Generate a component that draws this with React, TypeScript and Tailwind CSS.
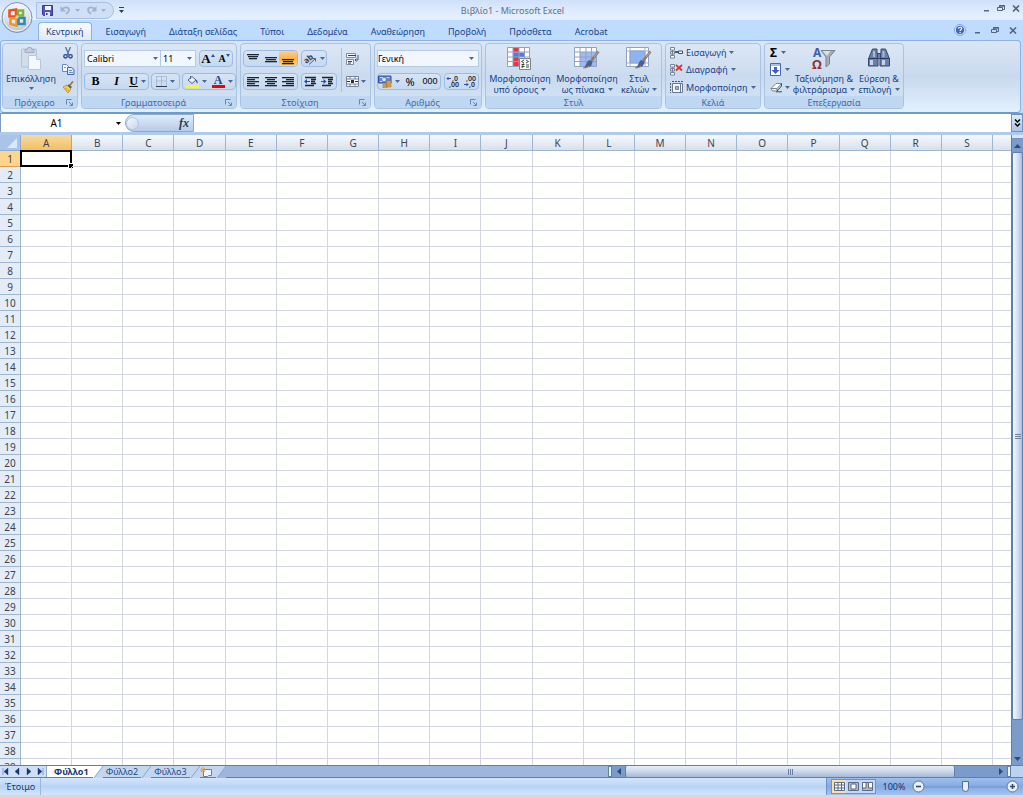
import type { ReactNode } from "react";

const COLUMNS = "ABCDEFGHIJKLMNOPQRS".split("");

const ROWS = Array.from({ length: 39 }, (_, i) => i + 1);

const TABS = [
    "Κεντρική",
    "Εισαγωγή",
    "Διάταξη σελίδας",
    "Τύποι",
    "Δεδομένα",
    "Αναθεώρηση",
    "Προβολή",
    "Πρόσθετα",
    "Acrobat",
];

/* ---------- small shared pieces ---------- */

function Caret({ className = "text-[#4a6896]" }: { className?: string }) {
    return (
        <svg width="5" height="3" viewBox="0 0 5 3" className={`shrink-0 ${className}`}>
            <path d="M0 0h5L2.500 3z" fill="currentColor" />
        </svg>
    );
}

function Frame({ children, className = "" }: { children: ReactNode; className?: string }) {
    return (
        <div
            className={`flex h-[17px] items-center rounded-sm border border-[#9dbbe0] bg-linear-to-b from-[#d6e4f5] to-[#c6d9f0] ${className}`}
        >
            {children}
        </div>
    );
}

function Tool({
    label,
    children,
    className = "",
}: {
    label: string;
    children: ReactNode;
    className?: string;
}) {
    return (
        <button
            type="button"
            aria-label={label}
            className={`flex h-full flex-1 items-center justify-center gap-[3px] text-black ${className}`}
        >
            {children}
        </button>
    );
}

interface GroupProps {
    title: string;
    launcher?: boolean;
    className: string;
    children: ReactNode;
}

function Group({ title, launcher, className, children }: GroupProps) {
    return (
        <section
            className={`flex h-[66px] shrink-0 flex-col overflow-hidden rounded-sm border border-[#a9c3e2] bg-linear-to-b from-[#dce7f5] via-[#cbdbef] to-[#d3e3f5] ${className}`}
        >
            <div className="flex min-h-0 flex-1">{children}</div>
            <div className="flex h-3 shrink-0 items-center bg-[#bfd7f1] text-[#3e6aaa]">
                <h2 className="flex-1 text-center">{title}</h2>
                {launcher && (
                    <button type="button" aria-label={`${title}…`} className="pr-1">
                        <svg width="7" height="7" viewBox="0 0 7 7" fill="none" stroke="#6686b5">
                            <path d="M.5 5.500V.5h5M3 3l3 3M6.500 3.500v3h-3" />
                        </svg>
                    </button>
                )}
            </div>
        </section>
    );
}

function BigButton({
    icon,
    lines,
    className = "",
}: {
    icon: ReactNode;
    lines: string[];
    className?: string;
}) {
    return (
        <button
            type="button"
            className={`flex shrink-0 flex-col items-center pt-[2px] leading-[11px] whitespace-nowrap text-[#15428b] ${className}`}
        >
            <span className="flex h-[27px] items-start">{icon}</span>
            <span>{lines[0]}</span>
            <span className="flex h-[11px] items-center gap-[3px]">
                {lines[1]}
                <Caret />
            </span>
        </button>
    );
}

/* ---------- icons ---------- */

function OfficeLogo() {
    return (
        <svg width="34" height="34" viewBox="0 0 34 34">
            <defs>
                <radialGradient id="orb" cx="50%" cy="30%" r="75%">
                    <stop offset="0" stopColor="#ffffff" />
                    <stop offset=".55" stopColor="#dfe3ea" />
                    <stop offset="1" stopColor="#a9b4c6" />
                </radialGradient>
            </defs>
            <circle cx="17" cy="17.500" r="15" fill="url(#orb)" stroke="#7e93b3" />
            <circle cx="17" cy="17.500" r="13.500" fill="none" stroke="#f5f8fc" />
            <g fill="none" strokeWidth="2.600">
                <path d="M16 16.500H9.500v-6l6.500-1z" stroke="#e8551f" />
                <path d="M18 15.500v-5h5v5z" stroke="#7cb53a" />
                <path d="M10.500 18.500h6v7l-6-1.500z" stroke="#ee9a22" />
                <path d="M18.500 18h6v6h-6z" stroke="#3388b8" />
            </g>
            <path d="M15.500 15.500h3v3h-3z" fill="#fff" opacity=".6" />
        </svg>
    );
}

function SaveIcon() {
    return (
        <svg width="11" height="11" viewBox="0 0 11 11">
            <path d="M.5.5h10v10h-9l-1-1z" fill="#5656b8" stroke="#3a3a8c" />
            <path d="M3 1h6v4H3z" fill="#f1f4fb" />
            <path d="M3 7h5v4H3z" fill="#dfe3f2" />
            <path d="M4 8h1.500v2H4z" fill="#3a3a8c" />
        </svg>
    );
}

function UndoIcon({ flip = false }: { flip?: boolean }) {
    return (
        <svg width="11" height="10" viewBox="0 0 11 10" className={flip ? "-scale-x-100" : ""}>
            <path
                d="M2 4.500C4 1.500 9 1.500 9 5c0 2-1.500 3-3 4"
                fill="none"
                stroke="#9fb2cf"
                strokeWidth="1.800"
            />
            <path d="M.5 1v5.500H6z" fill="#9fb2cf" />
        </svg>
    );
}

function WindowButtons({ className = "" }: { className?: string }) {
    return (
        <div className={`flex items-center text-[#56657c] ${className}`}>
            <button type="button" aria-label="Ελαχιστοποίηση">
                <svg width="7" height="7" viewBox="0 0 7 7">
                    <path d="M1 5h5v1.500H1z" fill="currentColor" />
                </svg>
            </button>
            <button type="button" aria-label="Επαναφορά">
                <svg width="8" height="7" viewBox="0 0 8 7" fill="none" stroke="currentColor">
                    <path d="M2.500 2V.5h5v4H6M.5 2.500h5v3h-5z" />
                    <path d="M2 1h6" strokeWidth="1.500" />
                </svg>
            </button>
            <button type="button" aria-label="Κλείσιμο">
                <svg width="8" height="7" viewBox="0 0 8 7" stroke="currentColor" fill="none">
                    <path d="M1 .5l6 6M7 .5l-6 6" strokeWidth="1.600" />
                </svg>
            </button>
        </div>
    );
}

function HelpIcon() {
    return (
        <svg width="12" height="12" viewBox="0 0 12 12">
            <circle cx="6" cy="6" r="5.500" fill="#e4edfa" stroke="#8aa5d2" />
            <circle cx="6" cy="6" r="4.200" fill="#3d66c0" />
            <path
                d="M4.500 4.800c0-2 3.200-2 3.200-.2 0 1.200-1.600 1.200-1.600 2.400"
                fill="none"
                stroke="#fff"
                strokeWidth="1.200"
            />
            <path d="M5.500 8h1.200v1.200H5.500z" fill="#fff" />
        </svg>
    );
}

function PasteIcon() {
    return (
        <svg width="22" height="25" viewBox="0 0 22 25">
            <rect x="1.500" y="3" width="15" height="18" rx="1" fill="#d3dceb" stroke="#b3c0d6" />
            <path d="M5 3.500h2l1-2h3l1 2h2v3H5z" fill="#c3cddd" stroke="#9dabc3" />
            <path d="M8.500 9.500h8l4 4v10h-12z" fill="#f4f7fc" stroke="#b8c6dc" />
            <path d="M16.500 9.500v4h4" fill="#dbe4f2" stroke="#b8c6dc" />
        </svg>
    );
}

function CutIcon() {
    return (
        <svg width="10" height="12" viewBox="0 0 10 12" fill="none">
            <path d="M2.500 0l3.500 8M7.500 0L4 8" stroke="#5b76ad" strokeWidth="1.400" />
            <circle cx="2.500" cy="9.300" r="1.700" stroke="#2b4a94" strokeWidth="1.400" />
            <circle cx="7.500" cy="9.300" r="1.700" stroke="#2b4a94" strokeWidth="1.400" />
        </svg>
    );
}

function CopyIcon() {
    return (
        <svg width="13" height="11" viewBox="0 0 13 11">
            <path d="M.5.5h4l2 2v5h-6z" fill="#f3f7ff" stroke="#6f88be" />
            <path d="M5.500 3.500h4l2.500 2v5H5.500z" fill="#dbe6fb" stroke="#4767ab" />
            <path d="M7 6.500h3M7 8.500h4M2 3.500h2" stroke="#6f8fd0" />
        </svg>
    );
}

function BrushIcon() {
    return (
        <svg width="12" height="12" viewBox="0 0 12 12">
            <path d="M1 6l4-2 4 4-3 4z" fill="#f4cf58" stroke="#b98a2c" strokeWidth=".8" />
            <path d="M3 7l4 3" stroke="#b98a2c" strokeWidth=".7" />
            <path d="M5.500 4.500L7 3l3 3-1.500 1.500z" fill="#5b5f78" />
            <path d="M8 4l3-3.500" stroke="#a0783c" strokeWidth="1.800" />
        </svg>
    );
}

function BordersIcon() {
    return (
        <svg width="11" height="11" viewBox="0 0 11 11" fill="none" stroke="#8d9fbe">
            <path d="M.5.5h10v9M.5.5v9M5.500.5v9M.5 5h10" strokeDasharray="1 1" />
            <path d="M0 10.500h11" stroke="#2e3d59" />
        </svg>
    );
}

function FillIcon() {
    return (
        <svg width="13" height="13" viewBox="0 0 13 13">
            <path d="M2 5l4-3.500L10 5 6 8.500z" fill="#e9effa" stroke="#4c6391" />
            <path d="M4.500 4V1" stroke="#4c6391" />
            <path d="M9.500 4.500c2 .5 2.500 2 2 4-1-.5-2-2-2-4z" fill="#3a62b5" />
            <path d="M0 10h13v3H0z" fill="#ffff00" />
        </svg>
    );
}

function AlignIcon({ widths, top = 1 }: { widths: [number, number][]; top?: number }) {
    return (
        <svg width="12" height="12" viewBox="0 0 12 12">
            {widths.map(([x, w], i) => (
                <rect key={i} x={x} y={top + i * 2} width={w} height="1.300" fill="#1d2530" />
            ))}
        </svg>
    );
}

function OrientationIcon() {
    return (
        <svg width="13" height="12" viewBox="0 0 13 12" className="overflow-visible">
            <text
                x="0"
                y="9"
                fontSize="8"
                fontWeight="700"
                fill="#333b49"
                transform="rotate(-40 4 7)"
            >
                ab
            </text>
            <path d="M5 11.500L11 6M11.500 8.500V5.500h-3" fill="none" stroke="#555f70" />
        </svg>
    );
}

function IndentIcon({ right = false }: { right?: boolean }) {
    return (
        <svg width="13" height="11" viewBox="0 0 13 11">
            <path
                d="M1 1.500h11M7 3.500h5M7 5.500h4M7 7.500h5M1 9.500h9"
                stroke="#1d2530"
                strokeWidth="1.300"
            />
            <path d={right ? "M5.500 5.500l-3-2.500v5z" : "M0 5.500l3-2.500v5z"} fill="#2a4f9e" />
            <path d={right ? "M0 5.500h3" : "M3 5.500h3"} stroke="#2a4f9e" />
        </svg>
    );
}

function WrapIcon() {
    return (
        <svg width="13" height="12" viewBox="0 0 13 12" fill="none">
            <path d="M.5.5h9v4h-9zM.5 6.500h7v5h-7z" fill="#f5f7fb" stroke="#818c9f" />
            <path d="M2 2.500h8M2 8.500h4M2 10h3" stroke="#39424f" />
            <path d="M12 2v5H9M10.500 5.500L9 7l1.500 1.500" stroke="#4d5a70" />
        </svg>
    );
}

function MergeIcon() {
    return (
        <svg width="13" height="11" viewBox="0 0 13 11">
            <path d="M.5.5h12v10H.5z" fill="#fff" stroke="#75829a" />
            <path d="M.5 3h12M.5 8h12M4 .5V3M9 .5V3M4 8v2.500M9 8v2.500" stroke="#75829a" />
            <path d="M1 5.500h3M12 5.500H9" stroke="#23304a" />
            <path d="M5 4h3v3H5z" fill="#23304a" />
        </svg>
    );
}

function CurrencyIcon() {
    return (
        <svg width="14" height="13" viewBox="0 0 14 13">
            <path d="M.5 1h12.500v7H.5z" fill="#6386cf" stroke="#32509b" />
            <path d="M2 2.500h3M8.500 2.500h3M2 6.500h2" stroke="#c4d4f4" />
            <circle cx="6" cy="4.500" r="1.800" fill="#dce7fb" />
            <path d="M5 9.500h4v3.500H5zM8.500 6h4.500v6H8.500z" fill="#e3b04c" stroke="#a9762a" strokeWidth=".6" />
            <path d="M8.500 8h4.500M8.500 10h4.500M5 11.300h3.500" stroke="#a9762a" strokeWidth=".6" />
        </svg>
    );
}

function DecimalIcon({ less = false }: { less?: boolean }) {
    return (
        <svg
            width="14"
            height="13"
            viewBox="0 0 14 13"
            fontSize="7"
            fontWeight="600"
            className="overflow-visible"
        >
            <path
                d={less ? "M1 9.500h4M3.500 8l1.500 1.500L3.500 11" : "M1 3.500h4M2.500 2L1 3.500 2.500 5"}
                fill="none"
                stroke="#2a4f9e"
            />
            <text x={less ? 3 : 6} y="6" fill="#222c3c">
                {less ? ",00" : ",0"}
            </text>
            <text x={less ? 6 : 3} y="12" fill="#222c3c">
                {less ? ",0" : ",00"}
            </text>
        </svg>
    );
}

function StyleGrid({ kind }: { kind: "rules" | "table" | "cell" }) {
    return (
        <svg width="26" height="25" viewBox="0 0 26 25">
            <path d="M.5 1.500h22v19H.5z" fill="#fff" stroke="#8fa2c4" />
            {kind === "rules" && (
                <>
                    <path d="M6 2h6v4.500H6zM6 11h6v9H6z" fill="#e03a3a" />
                    <path d="M6 6.500h11.500V11H6z" fill="#4f7ede" />
                </>
            )}
            {kind === "table" && <path d="M6 6h16v14H6z" fill="#9dbbf2" />}
            {kind === "cell" && <path d="M4 5h15v12H4z" fill="#8fb2f3" stroke="#6f92d6" />}
            {kind === "cell" ? (
                <path d="M.5 5h22M4 1.500v19M19 1.500v19M.5 17h22" stroke="#a4b3cd" fill="none" />
            ) : (
                <path
                    d="M6 1.500v19M12 1.500v19M17.500 1.500v19M.5 6h22M.5 11h22M.5 15.500h22"
                    stroke="#8fa2c4"
                    fill="none"
                />
            )}
            {kind === "rules" ? (
                <>
                    <path d="M12.500 12.500h11v11h-11z" fill="#f6f8f2" stroke="#7c8594" />
                    <path
                        d="M17 14l-2.500 1.500L17 17M19 14l2.500 1.500L19 17M14.500 18.500h3M14.500 20.500h3M16.500 17.500L15 22M19 19h3M19 21h3"
                        fill="none"
                        stroke="#2f3a33"
                        strokeWidth=".9"
                    />
                </>
            ) : (
                <>
                    <path d="M24.500 5.500L17 15" stroke="#8d7b6c" strokeWidth="2.600" />
                    <path d="M24.500 5.500L20 11" stroke="#b9a999" strokeWidth="1" />
                    <path d="M18.500 15.500c0 4-3.500 7-9.500 6.500 3.500-1.500 3-5.500 6-8z" fill="#4a5f93" />
                    <path d="M9 22c3 .5 5-1 6-2" stroke="#d49a4a" fill="none" />
                </>
            )}
        </svg>
    );
}

function CellsIcon({ kind }: { kind: "insert" | "delete" | "format" }) {
    if (kind === "format") {
        return (
            <svg width="13" height="13" viewBox="0 0 13 13" fill="none">
                <path d="M2.500 2.500h10v9h-10z" fill="#f2f5fb" stroke="#667895" />
                <path d="M5.500 5.500h3v3h-3z" fill="#a3aec1" stroke="#76849c" />
                <path d="M2 .5h11M.5 2v10" stroke="#4c5a73" strokeDasharray="2 1" />
                <path d="M10.500 3v9" stroke="#667895" />
            </svg>
        );
    }
    return (
        <svg width="13" height="12" viewBox="0 0 13 12" fill="none">
            <path d="M.5.5h4v2.500h-4zM.5 8.500h4V11h-4z" fill="#fff" stroke="#75829a" />
            <path d="M2.500 3v5.500M.5 4.500h4v2.500h-4z" fill="#e4ebf7" stroke="#75829a" />
            {kind === "insert" ? (
                <>
                    <path d="M5 5h3" stroke="#222c3c" strokeWidth="1.500" />
                    <path d="M8.500 4h4v2.500h-4z" fill="#fff" stroke="#3e4c66" />
                </>
            ) : (
                <path d="M6 1l6 5.500M12 1L6 6.500" stroke="#d83434" strokeWidth="1.700" />
            )}
        </svg>
    );
}

function FillDownIcon() {
    return (
        <svg width="11" height="13" viewBox="0 0 11 13">
            <path d="M.5.5h10v12H.5z" fill="#fff" stroke="#4a68ab" />
            <path d="M1 1h9v2H1z" fill="#a9c0ea" />
            <path d="M4 4h3v3h2.500L5.500 11 1.500 7H4z" fill="#3b62c4" />
        </svg>
    );
}

function EraserIcon() {
    return (
        <svg width="13" height="11" viewBox="0 0 13 11">
            <path d="M1 6.500L6 1.500h5.500L7 6.500z" fill="#fff" stroke="#7a8494" />
            <path d="M1 6.500h6v2.500H2.500z" fill="#f0f2f6" stroke="#7a8494" />
            <path d="M7 9l4.500-5V1.500M6 9.800h6" stroke="#3f4856" fill="none" />
        </svg>
    );
}

function SortFilterIcon() {
    return (
        <svg width="24" height="25" viewBox="0 0 24 25" className="overflow-visible">
            <path d="M9 4.500h14L17.500 11v7L14 21v-10z" fill="#a8adb5" stroke="#7d838d" />
            <path d="M10.500 5h8L15 10z" fill="#dcdfe4" />
            <text x="1" y="11" fontSize="12" fontWeight="700" fill="#3e5fa6">
                A
            </text>
            <text x="0" y="23" fontSize="13" fontWeight="700" fill="#8e3038">
                Ω
            </text>
        </svg>
    );
}

function BinocularsIcon() {
    return (
        <svg width="24" height="24" viewBox="0 0 24 24">
            <g fill="#6980ab" stroke="#34496f">
                <path d="M5.500 3h4.500v3l1 4v10H1.500v-7L4 6.500z" />
                <path d="M14 3h4.500L20 6.500l2.500 6.500v7H13V10l1-4z" />
                <path d="M10.500 7.500h3v5h-3z" />
            </g>
            <path d="M3 14h3v5H3zM15 14h3v5h-3z" fill="#c7d4ea" />
            <path d="M6 5h2v6H6zM15.500 5h2v6h-2z" fill="#a9bad8" />
            <path d="M1.500 12.500H11M13 12.500h9.500" stroke="#2a3c60" />
        </svg>
    );
}

/* ---------- top area ---------- */

function TitleBar() {
    return (
        <header className="flex h-5 shrink-0 items-center bg-linear-to-b from-[#cfe0f9] via-[#deeafd] to-[#e6f1ff]">
            <div className="ml-9 flex h-[17px] w-[78px] items-center rounded-r-full border border-[#a8bfdf] bg-[#cfdff5] pl-[5px]">
                <button type="button" aria-label="Αποθήκευση" className="w-[18px]">
                    <SaveIcon />
                </button>
                <button type="button" aria-label="Αναίρεση" className="flex w-[26px] items-center gap-1">
                    <UndoIcon />
                    <Caret className="text-[#9fb2cf]" />
                </button>
                <button type="button" aria-label="Επανάληψη" className="flex w-[24px] items-center gap-1">
                    <UndoIcon flip />
                    <Caret className="text-[#9fb2cf]" />
                </button>
            </div>
            <button type="button" aria-label="Προσαρμογή" className="ml-[5px]">
                <svg width="5" height="6" viewBox="0 0 5 6" fill="#24416f">
                    <path d="M0 0h5v1H0zM0 3h5L2.500 6z" />
                </svg>
            </button>
            <h1 className="mt-px flex-1 pr-[82px] text-center text-[#5c6f8f]">
                Βιβλίο1 - Microsoft Excel
            </h1>
            <WindowButtons className="mr-[3px] mb-1 gap-[7px]" />
        </header>
    );
}

function RibbonTabs() {
    return (
        <nav className="flex h-5 shrink-0 items-end bg-[#bfdbff] pl-[38px]">
            <div role="tablist" className="flex flex-1 gap-[5px]">
                {TABS.map((tab, i) => (
                    <button
                        key={tab}
                        type="button"
                        role="tab"
                        aria-selected={i === 0}
                        className={
                            i === 0
                                ? "h-[18px] rounded-t-sm border border-b-0 border-[#8db2e3] bg-linear-to-b from-[#f7fbff] to-[#dfeaf8] px-[7px] text-[#15428b]"
                                : "h-[18px] px-[9px] text-[#15428b]"
                        }
                    >
                        {tab}
                    </button>
                ))}
            </div>
            <div className="mr-[6px] mb-1 flex items-center gap-2">
                <button type="button" aria-label="Βοήθεια">
                    <HelpIcon />
                </button>
                <WindowButtons className="gap-[10px]" />
            </div>
        </nav>
    );
}

function ClipboardGroup() {
    return (
        <Group title="Πρόχειρο" launcher className="w-[76px]">
            <button
                type="button"
                className="flex w-14 flex-col items-center pt-[2px] leading-[11px] text-[#15428b]"
            >
                <span className="flex h-[27px] items-start">
                    <PasteIcon />
                </span>
                <span>Επικόλληση</span>
                <span className="flex h-[9px] items-center">
                    <Caret />
                </span>
            </button>
            <div className="flex flex-1 flex-col items-center justify-around">
                <button type="button" aria-label="Αποκοπή">
                    <CutIcon />
                </button>
                <button type="button" aria-label="Αντιγραφή">
                    <CopyIcon />
                </button>
                <button type="button" aria-label="Πινέλο μορφοποίησης">
                    <BrushIcon />
                </button>
            </div>
        </Group>
    );
}

function FontGroup() {
    return (
        <Group title="Γραμματοσειρά" launcher className="w-[156px]">
            <div className="flex flex-1 flex-col justify-center gap-[6px] px-[2px]">
                <div className="flex">
                    <label className="flex h-[17px] w-[77px] items-center border border-[#b3cbe8] bg-[#f2f7fd] pr-[2px]">
                        <input
                            aria-label="Γραμματοσειρά"
                            defaultValue="Calibri"
                            className="w-0 flex-1 pl-[2px] text-black outline-none"
                        />
                        <Caret />
                    </label>
                    <label className="flex h-[17px] w-[35px] items-center border border-l-0 border-[#b3cbe8] bg-[#f2f7fd] pr-[3px]">
                        <input
                            aria-label="Μέγεθος"
                            defaultValue="11"
                            className="w-0 flex-1 pl-[2px] text-black outline-none"
                        />
                        <Caret />
                    </label>
                    <Frame className="ml-[3px] w-[34px] font-['Liberation_Serif',serif] font-bold">
                        <Tool label="Αύξηση μεγέθους" className="text-[13px]">
                            <span className="flex items-start">
                                A
                                <svg width="4" height="8" viewBox="0 0 4 8">
                                    <path d="M0 4l2-3 2 3z" fill="#2a4f9e" />
                                </svg>
                            </span>
                        </Tool>
                        <Tool label="Μείωση μεγέθους" className="text-[10px]">
                            <span className="flex items-start">
                                A
                                <svg width="4" height="8" viewBox="0 0 4 8">
                                    <path d="M0 1h4L2 4z" fill="#2a4f9e" />
                                </svg>
                            </span>
                        </Tool>
                    </Frame>
                </div>
                <div className="flex gap-[2px]">
                    <Frame className="w-[65px] font-['Liberation_Serif',serif] text-[12px] font-bold">
                        <Tool label="Έντονα">B</Tool>
                        <Tool label="Πλάγια" className="italic">
                            I
                        </Tool>
                        <Tool label="Υπογράμμιση">
                            <span className="underline">U</span>
                            <Caret />
                        </Tool>
                    </Frame>
                    <Frame className="w-[29px]">
                        <Tool label="Περιγράμματα">
                            <BordersIcon />
                            <Caret />
                        </Tool>
                    </Frame>
                    <Frame className="w-[54px]">
                        <Tool label="Χρώμα γεμίσματος">
                            <FillIcon />
                            <Caret />
                        </Tool>
                        <Tool label="Χρώμα γραμματοσειράς">
                            <span className="flex w-[13px] flex-col items-center font-['Liberation_Serif',serif] text-[12px] leading-[10px] font-bold text-[#27448c]">
                                A
                                <span className="h-[3px] w-full bg-[#f00000]" />
                            </span>
                            <Caret />
                        </Tool>
                    </Frame>
                </div>
            </div>
        </Group>
    );
}

function AlignmentGroup() {
    return (
        <Group title="Στοίχιση" launcher className="w-[131px]">
            <div className="flex flex-col justify-center gap-[6px] pl-[2px]">
                <div className="flex gap-[3px]">
                    <Frame className="w-[55px]">
                        <Tool label="Στοίχιση επάνω">
                            <AlignIcon top={1} widths={[[0, 12], [1, 10], [2, 8]]} />
                        </Tool>
                        <Tool label="Στοίχιση στο μέσο">
                            <AlignIcon top={4} widths={[[0, 12], [1, 10], [0, 12]]} />
                        </Tool>
                        <Tool
                            label="Στοίχιση κάτω"
                            className="rounded-r-sm bg-linear-to-b from-[#fcd08a] via-[#ffb04a] to-[#ffd877]"
                        >
                            <AlignIcon top={6} widths={[[0, 12], [1, 10], [0, 12]]} />
                        </Tool>
                    </Frame>
                    <Frame className="w-[26px]">
                        <Tool label="Προσανατολισμός">
                            <OrientationIcon />
                            <Caret />
                        </Tool>
                    </Frame>
                </div>
                <div className="flex gap-[3px]">
                    <Frame className="w-[55px]">
                        <Tool label="Στοίχιση αριστερά">
                            <AlignIcon widths={[[0, 12], [0, 8], [0, 12], [0, 8], [0, 12]]} />
                        </Tool>
                        <Tool label="Στοίχιση στο κέντρο">
                            <AlignIcon widths={[[0, 12], [2, 8], [0, 12], [2, 8], [0, 12]]} />
                        </Tool>
                        <Tool label="Στοίχιση δεξιά">
                            <AlignIcon widths={[[0, 12], [4, 8], [0, 12], [4, 8], [0, 12]]} />
                        </Tool>
                    </Frame>
                    <Frame className="w-9">
                        <Tool label="Μείωση εσοχής">
                            <IndentIcon />
                        </Tool>
                        <Tool label="Αύξηση εσοχής">
                            <IndentIcon right />
                        </Tool>
                    </Frame>
                </div>
            </div>
            <div className="my-1 ml-1 w-px bg-[#a9c3e2]" />
            <div className="flex flex-col justify-center gap-[6px] pl-1">
                <button type="button" aria-label="Αναδίπλωση κειμένου" className="flex h-[17px] items-center">
                    <WrapIcon />
                </button>
                <button
                    type="button"
                    aria-label="Συγχώνευση"
                    className="flex h-[17px] items-center gap-[2px]"
                >
                    <MergeIcon />
                    <Caret />
                </button>
            </div>
        </Group>
    );
}

function NumberGroup() {
    return (
        <Group title="Αριθμός" launcher className="w-[108px]">
            <div className="flex flex-1 flex-col justify-center gap-[6px] px-[2px]">
                <label className="flex h-[17px] items-center border border-[#b3cbe8] bg-[#f2f7fd] pr-1">
                    <select
                        aria-label="Μορφή αριθμού"
                        className="w-0 flex-1 appearance-none text-black outline-none"
                    >
                        <option>Γενική</option>
                    </select>
                    <Caret />
                </label>
                <div className="flex gap-[3px]">
                    <Frame className="w-[64px]">
                        <Tool label="Νομισματική μορφή">
                            <CurrencyIcon />
                            <Caret />
                        </Tool>
                        <Tool label="Στυλ ποσοστού" className="text-[11px]">
                            %
                        </Tool>
                        <Tool label="Στυλ χιλιάδων" className="font-['Liberation_Sans',sans-serif]">
                            000
                        </Tool>
                    </Frame>
                    <Frame className="flex-1">
                        <Tool label="Αύξηση δεκαδικών">
                            <DecimalIcon />
                        </Tool>
                        <Tool label="Μείωση δεκαδικών">
                            <DecimalIcon less />
                        </Tool>
                    </Frame>
                </div>
            </div>
        </Group>
    );
}

function CellsRow({ icon, label }: { icon: ReactNode; label: string }) {
    return (
        <button type="button" className="flex h-[18px] items-center gap-[3px] text-[#15428b]">
            {icon}
            {label}
            <Caret />
        </button>
    );
}

function Ribbon() {
    return (
        <div className="shrink-0 bg-[#bfdbff] pr-[2px]">
            <div className="flex h-[73px] gap-[3px] overflow-hidden rounded-sm border border-t-[#8db2e3] border-r-[#8db2e3] border-b-[#6f9bc8] border-l-[#8db2e3] bg-linear-to-b from-[#dbe6f4] via-[#c9d9ee] to-[#e1f1fe] px-px pt-[2px]">
                <ClipboardGroup />
                <FontGroup />
                <AlignmentGroup />
                <NumberGroup />
                <Group title="Στυλ" className="w-[177px]">
                    <BigButton
                        className="w-[68px]"
                        icon={<StyleGrid kind="rules" />}
                        lines={["Μορφοποίηση", "υπό όρους"]}
                    />
                    <BigButton
                        className="w-[66px]"
                        icon={<StyleGrid kind="table" />}
                        lines={["Μορφοποίηση", "ως πίνακα"]}
                    />
                    <BigButton
                        className="w-[38px]"
                        icon={<StyleGrid kind="cell" />}
                        lines={["Στυλ", "κελιών"]}
                    />
                </Group>
                <Group title="Κελιά" className="w-[96px]">
                    <div className="flex flex-col justify-center pl-1">
                        <CellsRow icon={<CellsIcon kind="insert" />} label="Εισαγωγή" />
                        <CellsRow icon={<CellsIcon kind="delete" />} label="Διαγραφή" />
                        <CellsRow icon={<CellsIcon kind="format" />} label="Μορφοποίηση" />
                    </div>
                </Group>
                <Group title="Επεξεργασία" className="w-[140px]">
                    <div className="flex w-[27px] flex-col justify-center pl-[5px]">
                        <button
                            type="button"
                            aria-label="Άθροισμα"
                            className="flex h-[18px] items-center gap-1 text-[12px] font-bold text-black"
                        >
                            Σ
                            <Caret />
                        </button>
                        <button type="button" aria-label="Γέμισμα" className="flex h-[18px] items-center gap-1">
                            <FillDownIcon />
                            <Caret />
                        </button>
                        <button type="button" aria-label="Απαλοιφή" className="flex h-[18px] items-center gap-[2px]">
                            <EraserIcon />
                            <Caret />
                        </button>
                    </div>
                    <BigButton
                        className="w-16"
                        icon={<SortFilterIcon />}
                        lines={["Ταξινόμηση &", "φιλτράρισμα"]}
                    />
                    <BigButton
                        className="w-[46px]"
                        icon={<BinocularsIcon />}
                        lines={["Εύρεση &", "επιλογή"]}
                    />
                </Group>
            </div>
        </div>
    );
}

function FormulaBar() {
    return (
        <div className="flex h-[22px] shrink-0 items-stretch border-t border-b-3 border-t-[#6f9bc8] border-b-[#aecbee] bg-white">
            <label className="flex w-[125px] items-center border-l border-[#7b9cc8] pr-1">
                <input
                    aria-label="Πλαίσιο ονόματος"
                    defaultValue="A1"
                    className="w-0 flex-1 pr-1 text-center text-[10px] text-black outline-none"
                />
                <Caret className="text-black" />
            </label>
            <div className="flex w-[69px] items-center justify-between rounded-l-full border border-[#8ba9d3] bg-linear-to-b from-[#e2ecf9] to-[#b5cbe8] pr-1">
                <span className="size-[13px] rounded-full border border-[#b4c6df] bg-linear-to-br from-[#f5f8fc] to-[#c6d5ea]" />
                <button
                    type="button"
                    aria-label="Εισαγωγή συνάρτησης"
                    className="font-['Liberation_Serif',serif] text-[12px] font-bold text-[#27395a] italic"
                >
                    fx
                </button>
            </div>
            <input aria-label="Γραμμή τύπων" className="min-w-0 flex-1 px-1 text-[10px] outline-none" />
            <button
                type="button"
                aria-label="Ανάπτυξη γραμμής τύπων"
                className="flex w-3 items-center justify-center border border-[#6f93c6] bg-linear-to-b from-[#e2edfb] to-[#a8c3e8]"
            >
                <svg width="7" height="8" viewBox="0 0 7 8" fill="none" stroke="#000" strokeWidth="1.500">
                    <path d="M1 .5L3.500 3 6 .5M1 4.500L3.500 7 6 4.500" />
                </svg>
            </button>
        </div>
    );
}

/* ---------- sheet ---------- */

function Grid() {
    return (
        <div className="min-w-0 flex-1 overflow-hidden bg-white">
            <table className="w-full table-fixed border-separate border-spacing-0 text-center text-[10px] leading-[14px] text-[#3a4350]">
                <colgroup>
                    <col className="w-[21px]" />
                    {COLUMNS.map((c) => (
                        <col key={c} />
                    ))}
                    <col className="w-[18px]" />
                </colgroup>
                <thead>
                    <tr className="h-4">
                        <th className="border-r border-b border-[#8faacd] bg-[#a9c4e9] p-0">
                            <svg width="20" height="15" viewBox="0 0 20 15" className="block">
                                <path d="M17 3v10H7z" fill="#dce8f8" />
                            </svg>
                        </th>
                        {COLUMNS.map((c, i) => (
                            <th
                                key={c}
                                scope="col"
                                className={
                                    i === 0
                                        ? "border-r border-b border-[#d9a04b] bg-linear-to-b from-[#f9d99f] to-[#f1c15f] p-0 font-normal"
                                        : "border-r border-b border-[#9eb6ce] bg-linear-to-b from-[#f6f9fd] to-[#d9e0eb] p-0 font-normal"
                                }
                            >
                                {c}
                            </th>
                        ))}
                        <th className="border-b border-[#9eb6ce] bg-linear-to-b from-[#f6f9fd] to-[#d9e0eb] p-0" />
                    </tr>
                </thead>
                <tbody>
                    {ROWS.map((row) => (
                        <tr key={row} className="h-4">
                            <th
                                scope="row"
                                className={
                                    row === 1
                                        ? "border-r border-b border-[#d9a04b] bg-[#ffd58d] p-0 font-normal"
                                        : "border-r border-b border-[#9eb6ce] bg-[#e4ecf7] p-0 font-normal"
                                }
                            >
                                {row}
                            </th>
                            {COLUMNS.map((c, i) => (
                                <td key={c} className="relative border-r border-b border-[#d3d5e0] p-0">
                                    {row === 1 && i === 0 && (
                                        <span className="absolute -inset-px border-2 border-black">
                                            <span className="absolute -right-[3px] -bottom-[3px] size-[5px] border-t border-l border-white bg-black" />
                                        </span>
                                    )}
                                </td>
                            ))}
                            <td className="border-b border-[#d3d5e0] p-0" />
                        </tr>
                    ))}
                </tbody>
            </table>
        </div>
    );
}

function VerticalScroll() {
    return (
        <div className="flex w-3 shrink-0 flex-col items-center border-l border-[#5f7fae] bg-[#7b9ccb]">
            <div className="h-1 w-full border-b border-[#6f93c6] bg-[#dbe8f9]" />
            <button type="button" aria-label="Επάνω" className="flex h-[13px] items-center">
                <svg width="7" height="4" viewBox="0 0 7 4">
                    <path d="M0 4h7L3.500 0z" fill="#2f4a78" />
                </svg>
            </button>
            <div className="flex w-[11px] flex-1 flex-col items-center justify-center gap-px rounded-xs border border-[#5f7fae] bg-linear-to-r from-[#f3f7fd] via-[#d5e1f2] to-[#a9bfe0]">
                <span className="h-px w-[6px] bg-[#6b7f9f]" />
                <span className="h-px w-[6px] bg-[#6b7f9f]" />
                <span className="h-px w-[6px] bg-[#6b7f9f]" />
            </div>
            <button type="button" aria-label="Κάτω" className="flex h-[45px] items-end pb-1">
                <svg width="7" height="4" viewBox="0 0 7 4">
                    <path d="M0 0h7L3.500 4z" fill="#2f4a78" />
                </svg>
            </button>
        </div>
    );
}

function Slash({ left, right }: { left: string; right: string }) {
    return (
        <svg width="10" height="12" viewBox="0 0 10 12" className="shrink-0">
            <path d="M0 0h10v12H0z" fill={right} />
            <path d="M0 0h10L1 12H0z" fill={left} />
            <path d="M10 0L1 12" stroke="#8ba5cd" />
        </svg>
    );
}

function SheetBar() {
    const arrows = [
        { label: "Πρώτο φύλλο", d: "M1 0v7M6 0v7L2 3.500z" },
        { label: "Προηγούμενο φύλλο", d: "M5 0v7L1 3.500z" },
        { label: "Επόμενο φύλλο", d: "M2 0v7l4-3.500z" },
        { label: "Τελευταίο φύλλο", d: "M6 0v7M1 0v7l4-3.500z" },
    ];
    return (
        <div className="flex h-[13px] shrink-0 border-t border-b border-t-[#5f7fae] border-b-[#5f7fae] bg-[#9db6de]">
            <div className="flex w-[47px] items-center justify-around border-r border-[#8faacd] bg-[#cfe0f6]">
                {arrows.map((a) => (
                    <button key={a.label} type="button" aria-label={a.label}>
                        <svg width="7" height="7" viewBox="0 0 7 7" fill="#16377a" stroke="#16377a" strokeWidth=".4">
                            <path d={a.d} />
                        </svg>
                    </button>
                ))}
            </div>
            <button
                type="button"
                className="bg-white pr-[4px] pl-[7px] leading-[11px] font-bold text-[#15366f]"
            >
                Φύλλο1
            </button>
            <Slash left="#ffffff" right="#c3d6f0" />
            <button type="button" className="bg-[#c3d6f0] px-[3px] leading-[11px] text-[#27477f]">
                Φύλλο2
            </button>
            <Slash left="#c3d6f0" right="#c3d6f0" />
            <button type="button" className="bg-[#c3d6f0] px-[3px] leading-[11px] text-[#27477f]">
                Φύλλο3
            </button>
            <Slash left="#c3d6f0" right="#c3d6f0" />
            <button
                type="button"
                aria-label="Εισαγωγή φύλλου εργασίας"
                className="bg-[#c3d6f0] pr-[3px]"
            >
                <svg width="13" height="10" viewBox="0 0 13 10">
                    <path d="M3.500 2.500h8v6h-3l-1 1h-4z" fill="#f3f7fd" stroke="#6580b0" />
                    <path d="M3 0v6M0 3h6M1 1l4 4M5 1L1 5" stroke="#e69a3c" strokeWidth=".9" />
                </svg>
            </button>
            <Slash left="#c3d6f0" right="#9db6de" />
            <div className="flex-1" />
            <div className="flex w-[415px] bg-[#7b9ccb]">
                <span className="w-1 border border-[#5f7fae] bg-[#eef5fd]" />
                <button type="button" aria-label="Αριστερά" className="flex w-[13px] items-center justify-center">
                    <svg width="4" height="7" viewBox="0 0 4 7">
                        <path d="M4 0v7L0 3.500z" fill="#2f4a78" />
                    </svg>
                </button>
                <div className="flex flex-1 items-center justify-center gap-px rounded-xs border border-y-0 border-[#5f7fae] bg-linear-to-b from-[#e9eff8] via-[#cbd7e9] to-[#a5b8d6]">
                    <span className="h-[6px] w-px bg-[#6b7f9f]" />
                    <span className="h-[6px] w-px bg-[#6b7f9f]" />
                    <span className="h-[6px] w-px bg-[#6b7f9f]" />
                </div>
                <button type="button" aria-label="Δεξιά" className="flex w-[52px] items-center justify-end pr-1">
                    <svg width="4" height="7" viewBox="0 0 4 7">
                        <path d="M0 0v7l4-3.500z" fill="#2f4a78" />
                    </svg>
                </button>
                <span className="w-1 border border-[#5f7fae] bg-[#eef5fd]" />
                <span className="w-3 bg-[#bcd2f0]" />
            </div>
        </div>
    );
}

function RoundButton({ label, d }: { label: string; d: string }) {
    return (
        <button type="button" aria-label={label}>
            <svg width="13" height="13" viewBox="0 0 13 13">
                <circle cx="6.500" cy="6.500" r="5.500" fill="#e8f0fb" stroke="#58719c" />
                <path d={d} stroke="#2f4a78" strokeWidth="1.600" />
            </svg>
        </button>
    );
}

function StatusBar() {
    return (
        <footer className="flex h-[20px] shrink-0 border-b-3 border-[#d6d8dc] bg-linear-to-b from-[#d5e5fb] via-[#b9d4f8] to-[#d3e5fd] text-[#15366f]">
            <span className="w-[41px] border-r border-[#98b6de] pl-[5px] leading-[17px]">Έτοιμο</span>
            <div className="flex-1" />
            <div className="flex w-[197px] items-center border-l border-[#6f93c6] bg-linear-to-b from-[#9fc0ee] via-[#83aae2] to-[#a4c5f2] pl-1">
                <div className="flex h-[15px] w-[45px] items-center border border-[#6f93c6] bg-[#c3d8f4]">
                    <button
                        type="button"
                        aria-label="Κανονική"
                        className="flex h-full flex-1 items-center justify-center bg-[#fce0a0]"
                    >
                        <svg width="11" height="9" viewBox="0 0 11 9" fill="#fff" stroke="#5b6a86">
                            <path d="M.5.5h10v8H.5zM.5 3h10M.5 6h10M4 .5v8M7.500.5v8" />
                        </svg>
                    </button>
                    <button
                        type="button"
                        aria-label="Διάταξη σελίδας"
                        className="flex h-full flex-1 items-center justify-center"
                    >
                        <svg width="11" height="9" viewBox="0 0 11 9" stroke="#5b6a86">
                            <path d="M.5.5h10v8H.5z" fill="#b3bccb" />
                            <path d="M3 2h5v5H3z" fill="#fff" />
                        </svg>
                    </button>
                    <button
                        type="button"
                        aria-label="Προεπισκόπηση αλλαγών σελίδας"
                        className="flex h-full flex-1 items-center justify-center"
                    >
                        <svg width="11" height="9" viewBox="0 0 11 9" stroke="#5b6a86">
                            <path d="M.5.5h10v8H.5z" fill="#b3bccb" />
                            <path d="M.5.5H4V6H.5zM6.500.5h4V6h-4z" fill="#fff" />
                        </svg>
                    </button>
                </div>
                <button type="button" className="w-9 text-center">
                    100%
                </button>
                <RoundButton label="Σμίκρυνση" d="M4 6.500h5" />
                <input
                    type="range"
                    aria-label="Ζουμ"
                    defaultValue={50}
                    className="h-3 w-0 flex-1 appearance-none bg-linear-to-b from-transparent from-45% via-[#4f6c9c] via-50% to-transparent to-55% [&::-webkit-slider-thumb]:h-[11px] [&::-webkit-slider-thumb]:w-[7px] [&::-webkit-slider-thumb]:appearance-none [&::-webkit-slider-thumb]:rounded-b-full [&::-webkit-slider-thumb]:border [&::-webkit-slider-thumb]:border-[#4f6c9c] [&::-webkit-slider-thumb]:bg-[#e8f0fb]"
                />
                <RoundButton label="Μεγέθυνση" d="M4 6.500h5M6.500 4v5" />
                <span className="w-1" />
            </div>
        </footer>
    );
}

export default function App() {
    return (
        <div className="relative flex h-screen flex-col overflow-hidden bg-[#bfdbff] font-['Noto_Sans','Open_Sans',sans-serif] text-[9px] leading-[11px]">
            <TitleBar />
            <RibbonTabs />
            <Ribbon />
            <FormulaBar />
            <main className="flex min-h-0 flex-1">
                <Grid />
                <VerticalScroll />
            </main>
            <SheetBar />
            <StatusBar />
            <button type="button" aria-label="Κουμπί Office" className="absolute top-0 left-0">
                <OfficeLogo />
            </button>
        </div>
    );
}
